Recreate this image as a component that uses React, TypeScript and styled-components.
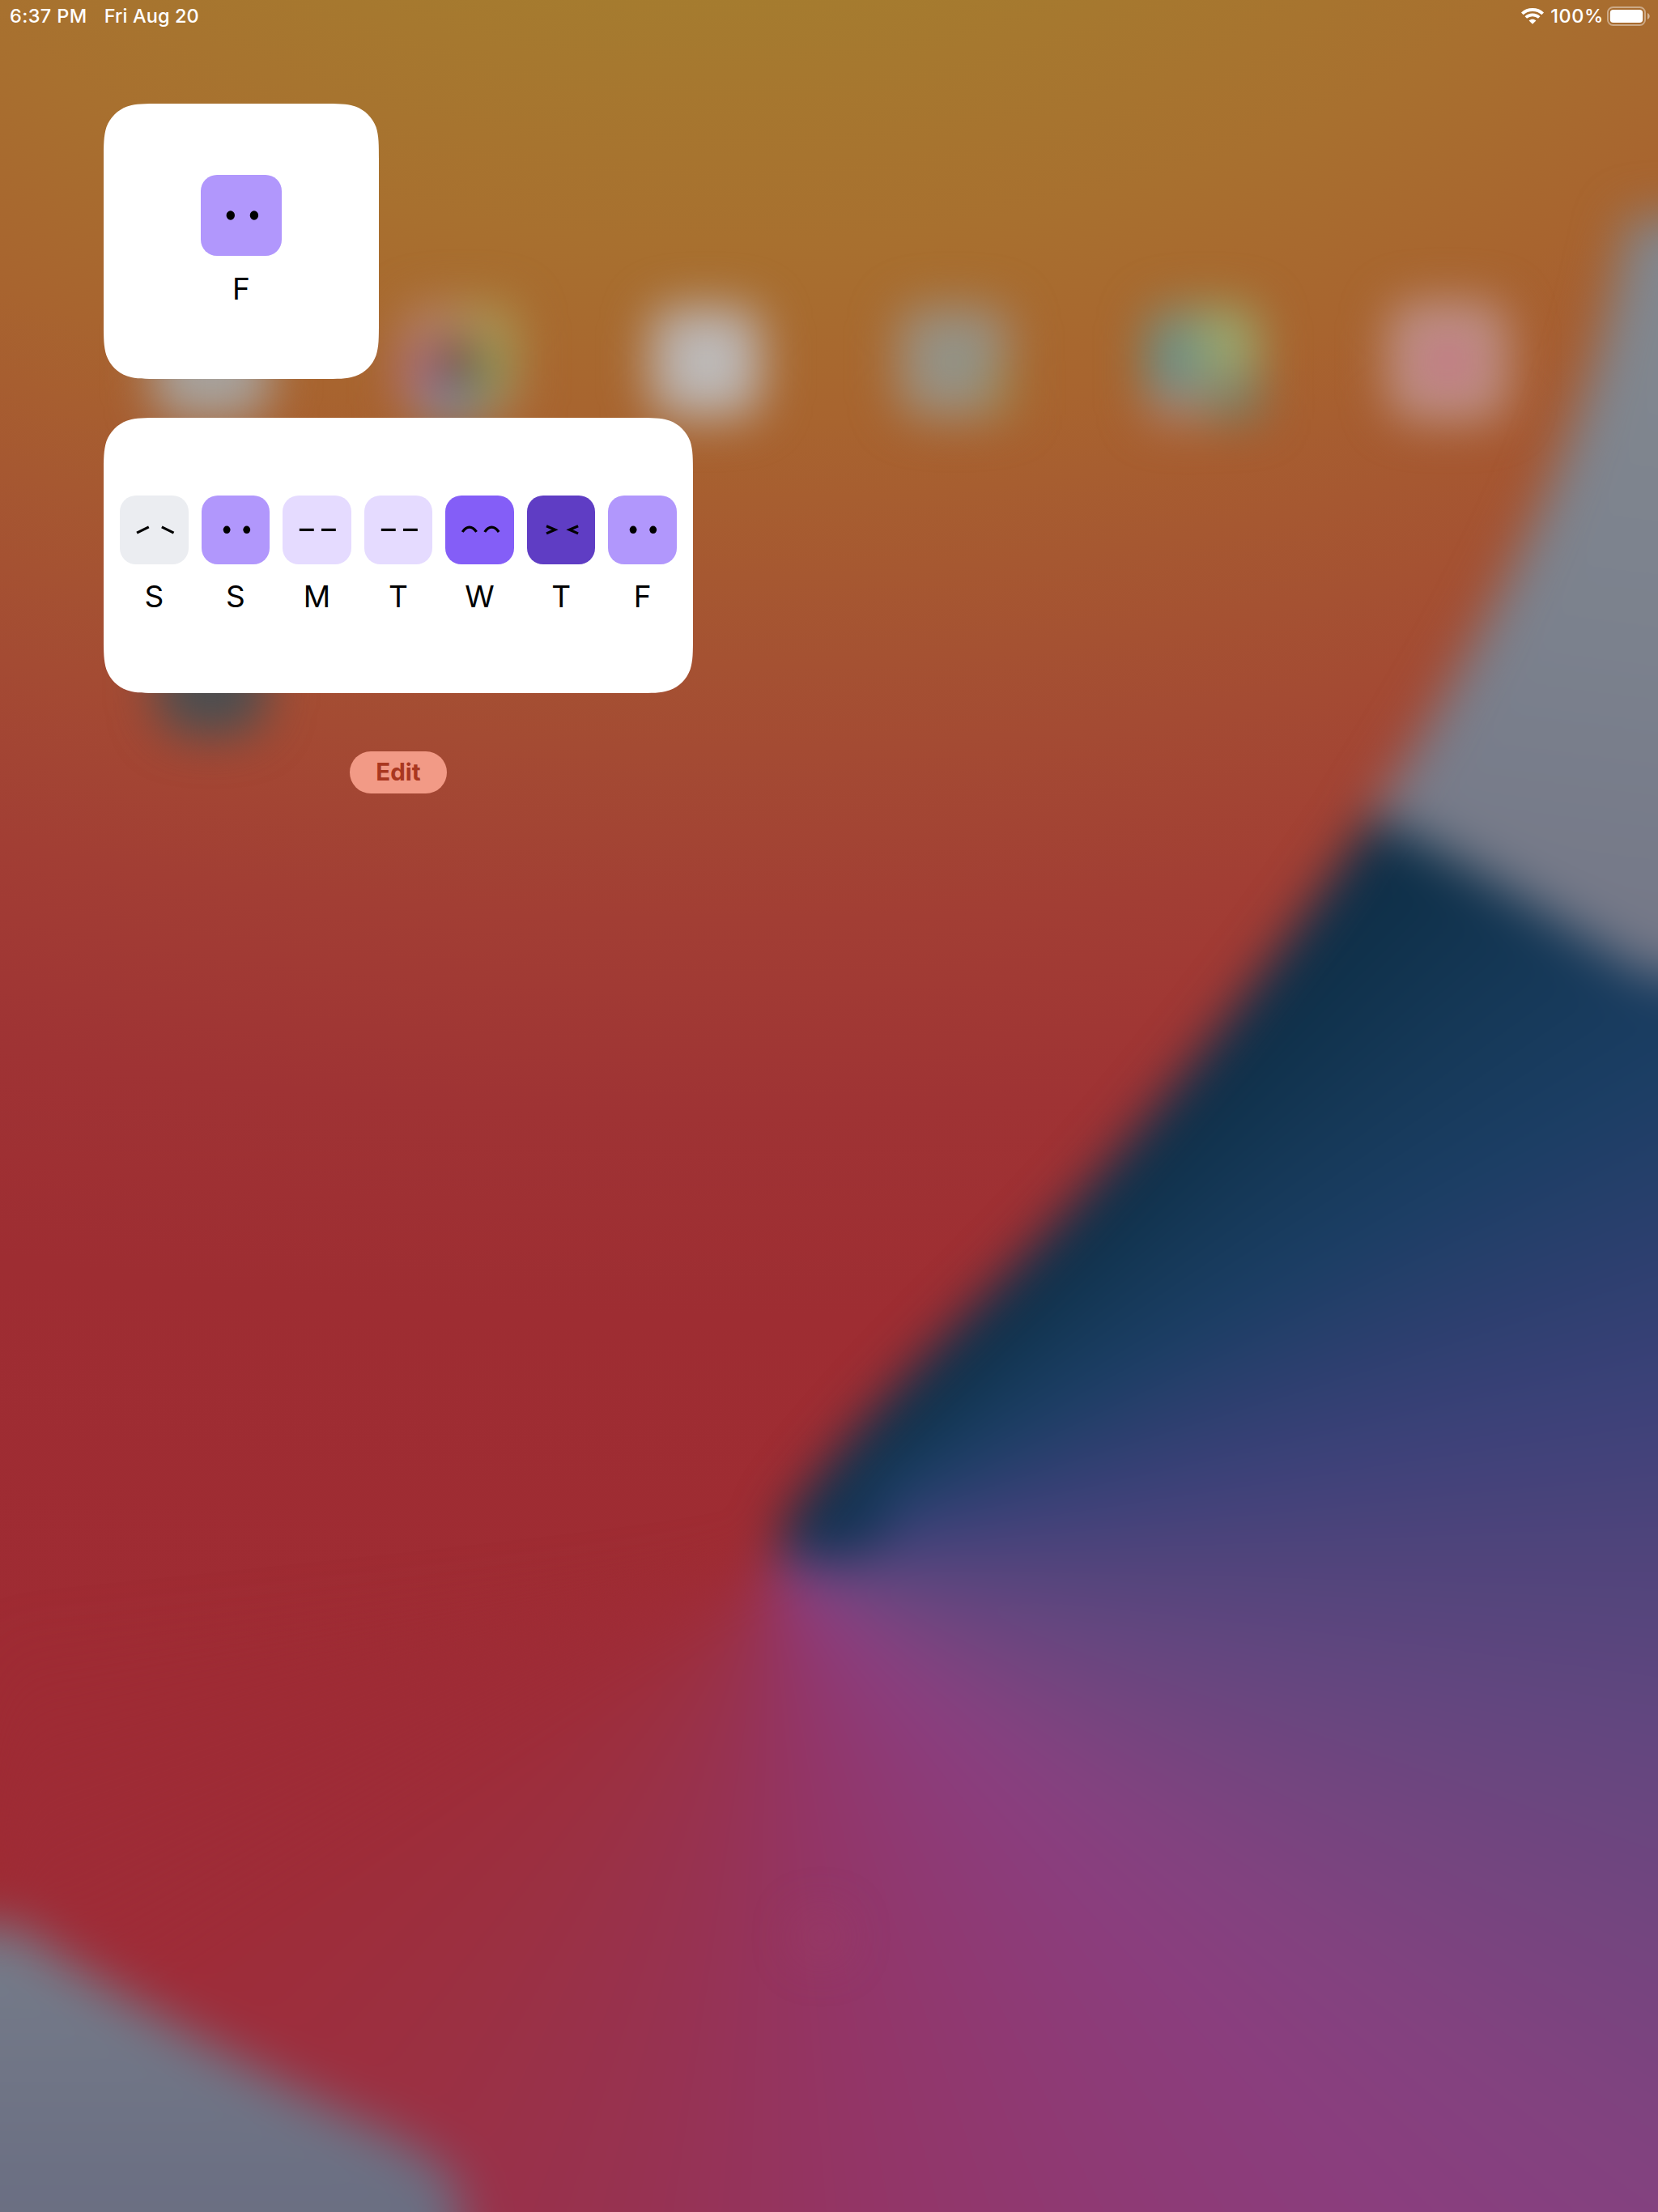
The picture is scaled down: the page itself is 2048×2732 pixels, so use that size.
import React from "react";
import styled, { createGlobalStyle } from "styled-components";

const GlobalStyle = createGlobalStyle`
  html, body { margin: 0; padding: 0; }
  body { background: #9e2c32; font-family: Inter, "Liberation Sans", sans-serif; }
  *, *::before, *::after { box-sizing: border-box; }
`;

const Screen = styled.main`
  position: relative;
  width: 2048px;
  height: 2732px;
  overflow: hidden;
  isolation: isolate;
  display: flex;
  flex-direction: column;
`;

/* ---------- Wallpaper ---------- */

const Wallpaper = styled.div`
  position: absolute;
  inset: 0;
  z-index: -1;
  background: radial-gradient(
    ellipse 4200px 2500px at 900px -400px,
    #a57c2f 15.5%,
    #a8702f 28%,
    #a8642f 37%,
    #a65831 44.5%,
    #a44b33 53%,
    #a23e34 61.5%,
    #9f3334 71%,
    #9e2d32 81%,
    #9f2b33 100%
  );
`;

const SoftLayer = styled.div<{ $blur: number }>`
  position: absolute;
  inset: 0;
  filter: blur(${(p) => p.$blur}px);
`;

const Sweep = styled.div`
  position: absolute;
  inset: 0 -200px -200px 0;
  clip-path: path("M968 1880 C1054 1752 1200 1622 1313 1500 C1450 1350 1590 1170 1710 986 L1790 860 L2248 860 L2248 2932 L0 2932 L0 1925 L962 1925 Z");
  background: conic-gradient(
    from 0deg at 955px 1925px,
    #0f3049 0deg,
    #0f3049 43deg,
    #153857 52deg,
    #1b3e64 61deg,
    #2b3f6e 70deg,
    #3d4179 80deg,
    #50447b 90deg,
    #62467f 101deg,
    #73457f 113deg,
    #82427f 125deg,
    #8a3e7e 136deg,
    #8e3a75 151deg,
    #933566 172deg,
    #973251 192deg,
    #9b3042 214deg,
    #9e2c38 236deg,
    rgba(158, 44, 51, 0) 265deg
  );
`;

const Shapes = styled.svg`
  position: absolute;
  inset: 0;
  width: 2048px;
  height: 2732px;
  overflow: visible;
`;

const WallpaperArt = () => (
  <Wallpaper>
    <SoftLayer $blur={30}>
      <Sweep />
      <Shapes viewBox="0 0 2048 2732">
        <defs>
          <linearGradient id="ridge" gradientUnits="userSpaceOnUse" x1="2000" y1="400" x2="1900" y2="1180">
            <stop offset="0" stopColor="#81878f" />
            <stop offset="0.5" stopColor="#7b818d" />
            <stop offset="1" stopColor="#747787" />
          </linearGradient>
          <linearGradient id="foot" gradientUnits="userSpaceOnUse" x1="0" y1="2400" x2="0" y2="2732">
            <stop offset="0" stopColor="#757b89" />
            <stop offset="1" stopColor="#6a6e82" />
          </linearGradient>
        </defs>
        <ellipse cx="1042" cy="1890" rx="62" ry="34" transform="rotate(-18 1042 1890)" fill="#163456" />
        <path fill="url(#ridge)" d="M1694 1008 C1820 812 1912 625 1956 490 C1982 415 1996 350 2014 268 H2250 V1206 H2040 C1940 1150 1830 1070 1694 1008 Z" />
        <path fill="url(#foot)" d="M-200 2378 H20 C140 2462 260 2528 400 2598 C480 2636 568 2668 570 2725 V2950 H-200 Z" />
      </Shapes>
    </SoftLayer>
    <SoftLayer $blur={28}>
      <Shapes viewBox="0 0 2048 2732">
        <rect x="189" y="374" width="144" height="144" rx="34" fill="#a7a29d" />
        <rect x="193" y="764" width="136" height="144" rx="44" fill="#4c4e50" />

        <g transform="translate(0 6)">
          <rect x="496" y="369" width="144" height="144" rx="34" fill="#b28366" />
          <path d="M568 368 h38 q33 0 33 34 v60 h-60 z" fill="#ab9656" />
          <path d="M495 415 h62 v78 h-62 z" fill="#ac7080" />
          <path d="M530 465 h60 v52 h-60 z" fill="#7c86a0" />
          <path d="M580 425 h38 v66 h-38 z" fill="#7e9a55" />
          <circle cx="564" cy="440" r="25" fill="#6a3f38" />

          <rect x="802" y="371" width="140" height="140" rx="34" fill="#b9aea8" />
          <rect x="840" y="405" width="74" height="74" rx="30" fill="#bebdbd" />

          <rect x="1108" y="371" width="140" height="140" rx="34" fill="#9e8e7b" />
          <rect x="1146" y="398" width="70" height="80" rx="30" fill="#8f9389" />
          <rect x="1222" y="440" width="28" height="66" fill="#9c8752" />

          <rect x="1416" y="371" width="140" height="140" rx="34" fill="#8a8d70" />
          <path d="M1480 371 h42 q34 0 34 34 v50 h-76 z" fill="#99a66d" />
          <path d="M1418 397 h58 v82 h-58 z" fill="#6a9089" />
          <path d="M1416 480 h72 v34 h-48 q-24 0 -24 -24 z" fill="#ad8377" />
          <path d="M1505 472 h52 v40 h-52 z" fill="#787e68" />

          <rect x="1715" y="366" width="147" height="147" rx="34" fill="#bc9289" />
          <circle cx="1789" cy="442" r="31" fill="#c5707f" />
        </g>
        <circle cx="1014" cy="2392" r="30" fill="#a34468" fillOpacity="0.35" />
      </Shapes>
    </SoftLayer>
  </Wallpaper>
);

/* ---------- Status bar ---------- */

const StatusBar = styled.header`
  display: flex;
  align-items: center;
  justify-content: space-between;
  height: 40px;
  padding: 0 10px 0 12px;
  color: #fff;
  font-size: 23.5px;
  font-weight: 500;
  line-height: 40px;
  white-space: nowrap;
`;

const StatusGroup = styled.div<{ $gap: number }>`
  display: flex;
  align-items: center;
  gap: ${(p) => p.$gap}px;
`;

const StatusText = styled.span<{ $tracking?: number }>`
  letter-spacing: ${(p) => p.$tracking ?? 0}px;
`;

const BatteryText = styled(StatusText)`
  margin: 0 -2px 0 2px;
`;

const WifiIcon = () => (
  <svg width="28" height="20" viewBox="0 0 28 20" fill="none" stroke="#fff">
    <path d="M1.3 6.9 C8.3 .3 19.7 .3 26.7 6.9" strokeWidth="3.9" />
    <path d="M5.8 11.5 C10.4 7.3 17.6 7.3 22.2 11.5" strokeWidth="3.7" />
    <path d="M14 19.8 L9.6 15.5 C12.1 13.2 15.9 13.2 18.4 15.5 Z" fill="#fff" stroke="none" />
  </svg>
);

const BatteryIcon = () => (
  <svg width="53" height="24" viewBox="0 0 53 24">
    <rect x="1" y="1" width="46" height="22" rx="6.5" fill="none" stroke="#fff" strokeOpacity="0.42" strokeWidth="2" />
    <rect x="3.8" y="4" width="40.4" height="16" rx="4" fill="#fff" />
    <path d="M50 8 C53.6 9.6 53.6 14.4 50 16 Z" fill="#fff" fillOpacity="0.5" />
  </svg>
);

/* ---------- Widgets ---------- */

/* Outline of a rectangle with continuous-curvature corners of radius r. */
const continuousRect = (w: number, h: number, r: number) => {
  const corner: [number, number][] = [
    [1.52866, 0], [1.08849, 0], [0.86841, 0], [0.66993, 0.0655], [0.63149, 0.07491],
    [0.37282, 0.16906], [0.16906, 0.37282], [0.07491, 0.63149],
    [0, 0.86841], [0, 1.08849], [0, 1.52866],
  ];
  const place = (pts: [number, number][], fx: boolean, fy: boolean) =>
    pts.map(([x, y]) => `${(fx ? w - x * r : x * r).toFixed(2)} ${(fy ? h - y * r : y * r).toFixed(2)}`);
  const back = [...corner].reverse();
  const seg = (p: string[]) =>
    `L${p[0]} C${p[1]} ${p[2]} ${p[3]} L${p[4]} C${p[5]} ${p[6]} ${p[7]} C${p[8]} ${p[9]} ${p[10]}`;
  const segBack = (p: string[]) =>
    `L${p[0]} C${p[1]} ${p[2]} ${p[3]} C${p[4]} ${p[5]} ${p[6]} L${p[7]} C${p[8]} ${p[9]} ${p[10]}`;
  const body = [
    seg(place(corner, true, false)),
    segBack(place(back, true, true)),
    seg(place(corner, false, true)),
    segBack(place(back, false, false)),
  ].join(" ");
  return `M${body.slice(1)} Z`;
};

const WidgetColumn = styled.section`
  display: flex;
  flex-direction: column;
  gap: 48px;
  width: 728px;
  margin: 88px 0 0 128px;
`;

const Card = styled.article<{ $width: number }>`
  display: flex;
  justify-content: center;
  gap: 16px;
  width: ${(p) => p.$width}px;
  height: 340px;
  background: #fff;
  clip-path: path("${(p) => continuousRect(p.$width, 340, 46)}");
`;

const SmallCard = styled(Card)`
  padding: 88px 20px 0;
`;

const WeekCard = styled(Card)`
  padding: 96px 20px 0;
`;

const Day = styled.div<{ $size?: number }>`
  display: flex;
  flex-direction: column;
  align-items: center;
  flex: ${(p) => (p.$size ? `0 0 ${p.$size}px` : "1 1 0")};
  min-width: 0;
`;

const Tile = styled.div<{ $color: string }>`
  width: 100%;
  aspect-ratio: 1;
  border-radius: 20px;
  background: ${(p) => p.$color};

  svg {
    display: block;
    width: 100%;
    height: 100%;
  }
`;

const Letter = styled.span<{ $gap: number }>`
  margin-top: ${(p) => p.$gap}px;
  color: #000;
  font-size: 37px;
  font-weight: 400;
  line-height: 44px;
`;

type Mood = "sad" | "calm" | "flat" | "happy" | "excited";

const moodColor: Record<Mood, string> = {
  sad: "#ebedf1",
  calm: "#b197fc",
  flat: "#e5dbff",
  happy: "#845ef7",
  excited: "#5f3dc4",
};

const Face = ({ mood }: { mood: Mood }) => (
  <svg viewBox="0 0 100 100" fill="none" stroke="#000" strokeWidth="3.8">
    {mood === "sad" && <path d="M24.9 54.5 L42.3 46 M61.3 46 L78.7 54.5" />}
    {mood === "calm" && (
      <g fill="#000" stroke="none">
        <ellipse cx="36.8" cy="50" rx="5.2" ry="5.7" />
        <ellipse cx="65.9" cy="50" rx="5.2" ry="5.7" />
      </g>
    )}
    {mood === "flat" && <path d="M24.6 50 H45.8 M56.7 50 H77.8" />}
    {mood === "happy" && <path d="M25.1 53.2 C31 43.9 39.6 43.9 45.6 53.2 M57.6 53.2 C63.5 43.9 72.1 43.9 78.2 53.2" />}
    {mood === "excited" && <path d="M28.4 44.6 L40.9 50 L28.4 55.4 M74.6 44.6 L62 50 L74.6 55.4" />}
  </svg>
);

const week: { letter: string; mood: Mood }[] = [
  { letter: "S", mood: "sad" },
  { letter: "S", mood: "calm" },
  { letter: "M", mood: "flat" },
  { letter: "T", mood: "flat" },
  { letter: "W", mood: "happy" },
  { letter: "T", mood: "excited" },
  { letter: "F", mood: "calm" },
];

const EditButton = styled.button`
  align-self: center;
  width: 120px;
  height: 52px;
  margin-top: 24px;
  padding: 0 0 2px;
  border: 0;
  border-radius: 26px;
  background: #f29a86;
  color: #a93720;
  font: 700 29.5px/50px Inter, "Liberation Sans", sans-serif;
  text-align: center;
`;

export default function App() {
  return (
    <Screen>
      <GlobalStyle />
      <WallpaperArt />
      <StatusBar>
        <StatusGroup $gap={21}>
          <StatusText $tracking={0.4}>6:37 PM</StatusText>
          <StatusText $tracking={0.1}>Fri Aug 20</StatusText>
        </StatusGroup>
        <StatusGroup $gap={6}>
          <WifiIcon />
          <BatteryText $tracking={0.6}>100%</BatteryText>
          <BatteryIcon />
        </StatusGroup>
      </StatusBar>
      <WidgetColumn>
        <SmallCard $width={340}>
          <Day $size={100}>
            <Tile $color={moodColor.calm}>
              <Face mood="calm" />
            </Tile>
            <Letter $gap={19}>F</Letter>
          </Day>
        </SmallCard>
        <WeekCard $width={728}>
          {week.map((day, i) => (
            <Day key={i}>
              <Tile $color={moodColor[day.mood]}>
                <Face mood={day.mood} />
              </Tile>
              <Letter $gap={18}>{day.letter}</Letter>
            </Day>
          ))}
        </WeekCard>
        <EditButton>Edit</EditButton>
      </WidgetColumn>
    </Screen>
  );
}
